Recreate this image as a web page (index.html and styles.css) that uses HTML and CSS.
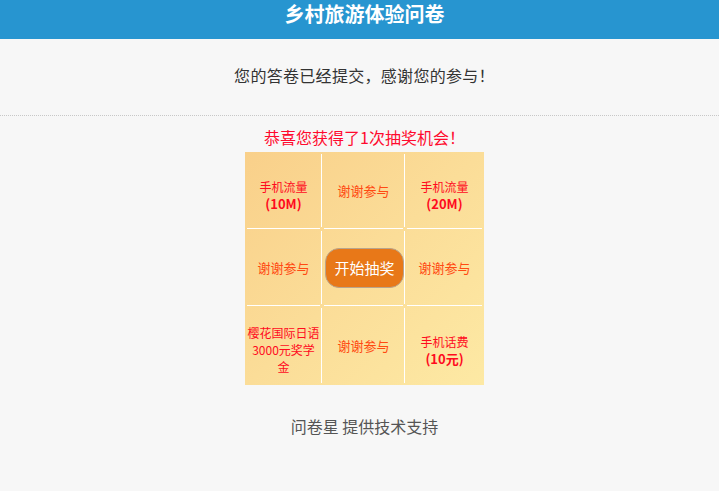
FILE: index.html
```html
<!DOCTYPE html>
<html lang="zh-CN">
<head>
  <meta charset="UTF-8" />
  <meta name="viewport" content="width=device-width, initial-scale=1.0"/>
  <title>乡村旅游体验问卷</title>
  <link rel="stylesheet" href="styles.css">
</head>
<body>
  <header class="top-bar">
    <h1>乡村旅游体验问卷</h1>
  </header>
  <div class="page">
    <div class="done-msg">您的答卷已经提交，感谢您的参与！</div>
    <div class="lottery">
      <div class="lottery-title">恭喜您获得了1次抽奖机会！</div>
      <div class="lottery-grid">
        <div class="cell prize"><span>手机流量<br><b>(10M)</b></span></div>
        <div class="cell thanks"><span>谢谢参与</span></div>
        <div class="cell prize"><span>手机流量<br><b>(20M)</b></span></div>
        <div class="cell thanks"><span>谢谢参与</span></div>
        <div class="cell"><button class="start-btn">开始抽奖</button></div>
        <div class="cell thanks"><span>谢谢参与</span></div>
        <div class="cell prize"><span>樱花国际日语<br>3000元奖学<br>金</span></div>
        <div class="cell thanks"><span>谢谢参与</span></div>
        <div class="cell prize"><span>手机话费<br><b>(10元)</b></span></div>
      </div>
    </div>
    <div class="support">问卷星 提供技术支持</div>
  </div>
</body>
</html>
```

FILE: styles.css
```css
body {
  font-family: "Noto Sans CJK SC", "Liberation Sans", sans-serif;
  background: #f7f7f7;
  margin: 0;
  padding: 0;
  color: #333;
}
.top-bar {
  height: 39px;
  background: #2795d0;
  padding-left: 10px;
}
.top-bar h1 {
  margin: 0;
  font-size: 20px;
  line-height: 28px;
  color: #fff;
  text-align: center;
  font-weight: bold;
}
.page {
  padding-left: 10px;
}
.done-msg {
  font-size: 16px;
  line-height: 24px;
  text-align: center;
  letter-spacing: 0.3px;
  padding: 24px 0 28px 10px;
  margin-left: -10px;
  border-bottom: 1px dotted #c8c8c8;
}
.lottery-title {
  font-size: 16px;
  line-height: 24px;
  color: #ff0a2e;
  text-align: center;
  padding-top: 9px;
  margin-bottom: 3px;
}
.lottery-grid {
  width: 239px;
  margin: 0 auto;
  display: grid;
  grid-template-columns: 77px 83px 79px;
  grid-template-rows: 77px 77px 79px;
  background: linear-gradient(135deg, #f9d08a 0%, #fbdd98 50%, #fde9a4 100%);
}
.cell {
  position: relative;
  display: flex;
  align-items: center;
  justify-content: center;
  text-align: center;
  font-size: 12px;
  line-height: 17px;
}
.cell:not(:nth-child(3n))::before {
  content: "";
  position: absolute;
  right: 0;
  top: 2px;
  bottom: 2px;
  width: 1px;
  background: #fff;
}
.cell:nth-child(-n+6)::after {
  content: "";
  position: absolute;
  bottom: 0;
  left: 2px;
  right: 2px;
  height: 1px;
  background: #fff;
}
.prize {
  color: #ff0a1e;
  padding-top: 8px;
}
.prize b {
  font-size: 13px;
}
.thanks {
  color: #ff4a12;
  font-size: 13px;
}
.start-btn {
  width: 79px;
  height: 40px;
  margin-left: 2px;
  border: 1px solid #b9a48c;
  border-radius: 14px;
  background: #e87818;
  color: #fff;
  font-family: inherit;
  font-size: 15px;
  cursor: pointer;
}
.support {
  font-size: 16px;
  line-height: 24px;
  color: #555;
  text-align: center;
  margin-top: 29px;
}
```
